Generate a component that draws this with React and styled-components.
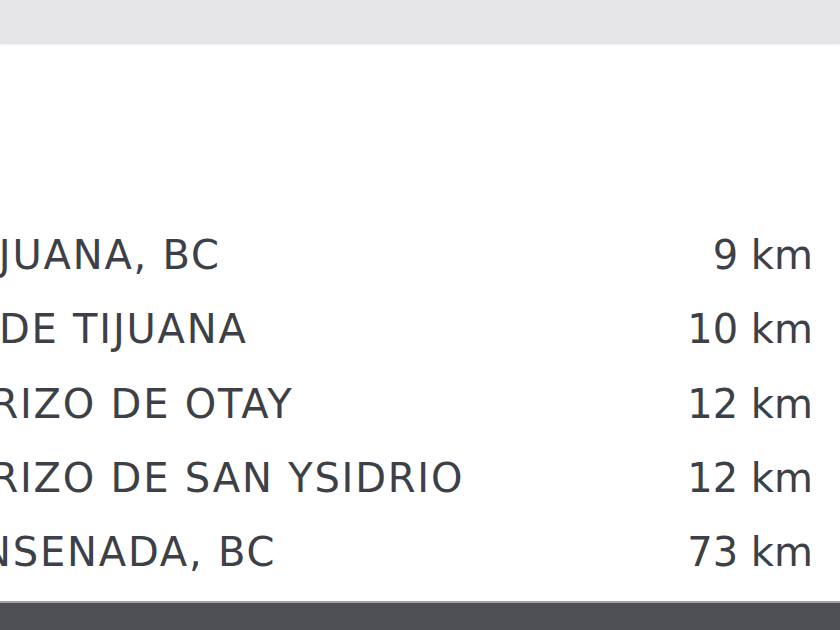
import React from "react";
import styled, { createGlobalStyle } from "styled-components";

const Global = createGlobalStyle`
  html, body { margin: 0; padding: 0; background: #ffffff; }
  body { font-family: "DejaVu Sans", "Liberation Sans", sans-serif; }
`;

const Page = styled.div`
  width: 840px;
  height: 630px;
  display: flex;
  flex-direction: column;
  overflow: hidden;
  background: #ffffff;
`;

const TopBar = styled.div`
  height: 44px;
  flex: none;
  background: #e6e6e8;
  box-shadow: 0 1px 2px rgba(0, 0, 0, 0.06);
`;

const Main = styled.main`
  flex: 1;
  padding: 174px 27px 0 0;
`;

const List = styled.ul`
  list-style: none;
  margin: 0;
  padding: 0;
`;

const Row = styled.li`
  height: 74.25px;
  display: flex;
  align-items: center;
  justify-content: space-between;
  color: #3d4046;
  font-size: 40px;
  white-space: nowrap;
`;

const Place = styled.span`
  letter-spacing: 1.8px;
  margin-left: ${(p) => -p.$cut}px;
`;

const Distance = styled.span`
  letter-spacing: 0;
`;

const Footer = styled.footer`
  height: 27px;
  flex: none;
  background: #4f5055;
  border-top: 2px solid #a2a2a4;
`;

const rows = [
  { name: "TIJUANA, BC", cut: 41, km: "9 km" },
  { name: "AEROPUERTO DE TIJUANA", cut: 305, km: "10 km" },
  { name: "CRUCE FRONTERIZO DE OTAY", cut: 344, km: "12 km" },
  { name: "CRUCE FRONTERIZO DE SAN YSIDRIO", cut: 344, km: "12 km" },
  { name: "ENSENADA, BC", cut: 46, km: "73 km" },
];

export default function App() {
  return (
    <>
      <Global />
      <Page>
        <TopBar />
        <Main>
          <List>
            {rows.map((r) => (
              <Row key={r.name}>
                <Place $cut={r.cut}>{r.name}</Place>
                <Distance>{r.km}</Distance>
              </Row>
            ))}
          </List>
        </Main>
        <Footer />
      </Page>
    </>
  );
}
